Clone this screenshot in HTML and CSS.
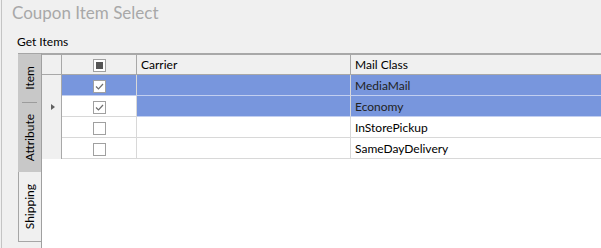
FILE: index.html
```html
<!DOCTYPE html>
<html>

<head>
	<meta charset="UTF-8">
	<title>Coupon Item Select</title>
	<link rel="stylesheet" href="styles.css">
</head>

<body>
	<div class="window">
		<h1 class="title">Coupon Item Select</h1>
		<div class="section-label">Get Items</div>

		<div class="panel">
			<!-- 縦タブ -->
			<div class="tabs">
				<div class="tab"><span>Item</span></div>
				<div class="tab-sep"></div>
				<div class="tab tab-long"><span>Attribute</span></div>
				<div class="tab tab-long selected"><span>Shipping</span></div>
			</div>

			<div class="grid">
				<table>
					<colgroup>
						<col class="col-rowhead">
						<col class="col-check">
						<col class="col-carrier">
						<col>
					</colgroup>
					<thead>
						<tr>
							<th class="rowhead"></th>
							<th class="check"><span class="checkbox partial"></span></th>
							<th>Carrier</th>
							<th class="last">Mail Class</th>
						</tr>
					</thead>
					<tbody>
						<tr class="selected-row">
							<td class="rowhead"></td>
							<td class="check"><span class="checkbox checked"><svg viewBox="0 0 11 11"><polyline points="2,5.5 4.5,8 9,3" /></svg></span></td>
							<td></td>
							<td class="last">MediaMail</td>
						</tr>
						<tr class="selected-row current">
							<td class="rowhead"><span class="row-arrow"></span></td>
							<td class="check"><span class="checkbox checked"><svg viewBox="0 0 11 11"><polyline points="2,5.5 4.5,8 9,3" /></svg></span></td>
							<td></td>
							<td class="last">Economy</td>
						</tr>
						<tr>
							<td class="rowhead"></td>
							<td class="check"><span class="checkbox"></span></td>
							<td></td>
							<td class="last">InStorePickup</td>
						</tr>
						<tr>
							<td class="rowhead"></td>
							<td class="check"><span class="checkbox"></span></td>
							<td></td>
							<td class="last">SameDayDelivery</td>
						</tr>
					</tbody>
				</table>
			</div>
		</div>
	</div>
</body>

</html>
```

FILE: styles.css
```css
html,
body {
	margin: 0;
	height: 100%;
	background: #f0f0f0;
	font-family: "Lato", "Noto Sans", sans-serif;
	font-size: 12px;
	color: #000;
}

.window {
	box-sizing: border-box;
	height: 248px;
	margin-left: 1px;
	border-left: 1px solid #c4c4c4;
	display: flex;
	flex-direction: column;
	overflow: hidden;
}

.title {
	margin: 0;
	padding: 3px 0 0 10px;
	height: 27px;
	font-size: 17px;
	font-weight: normal;
	line-height: 20px;
	color: #a8a8a8;
}

.section-label {
	padding: 5px 0 0 15px;
	height: 18px;
	line-height: 14px;
}

/* タブ + グリッド */
.panel {
	flex: 1;
	display: flex;
	padding-left: 16px;
	min-height: 0;
}

.tabs {
	width: 23px;
	display: flex;
	flex-direction: column;
}

.tab {
	height: 49px;
	background: #c8c8c8;
	border-top: 1px solid #a6a6a6;
	box-sizing: border-box;
	display: flex;
	align-items: center;
	justify-content: center;
}

.tab span {
	writing-mode: vertical-rl;
	transform: rotate(180deg);
	line-height: 14px;
}

.tab-sep {
	height: 1px;
	margin: 0 4px;
	background: #9c9c9c;
	box-shadow: 0 0 0 4px #c8c8c8;
	clip-path: inset(0 -4px 0 -4px);
}

.tab-long {
	height: 69px;
	border-top: none;
}

.tab.selected {
	height: 70px;
	background: #f0f0f0;
	border-left: 1px solid #a6a6a6;
	border-bottom: 1px solid #a6a6a6;
}

.grid {
	flex: 1;
	background: #fff;
	border-left: 1px solid #a0a0a0;
}

table {
	width: 100%;
	table-layout: fixed;
	border-collapse: separate;
	border-spacing: 0;
}

.col-rowhead {
	width: 20px;
}

.col-check {
	width: 75px;
}

.col-carrier {
	width: 214px;
}

th,
td {
	box-sizing: border-box;
	height: 21px;
	padding: 0 0 0 4px;
	border-right: 1px solid #d8d8d8;
	border-bottom: 1px solid #d8d8d8;
	text-align: left;
	font-weight: normal;
	white-space: nowrap;
	overflow: hidden;
	vertical-align: middle;
}

th {
	height: 22px;
	background: #f0f0f0;
	border-top: 2px solid #a8a8a8;
	border-right-color: #a8a8a8;
	border-bottom-color: #a8a8a8;
}

th.last,
td.last {
	border-right: none;
}

td.rowhead,
th.rowhead {
	padding: 0;
	background: #f0f0f0;
	border-right-color: #a8a8a8;
	border-bottom: none;
}

th.rowhead {
	border-bottom: 1px solid #a8a8a8;
}

.check {
	padding: 0;
	text-align: center;
}

.selected-row td {
	background: #7896dd;
	color: #222;
	border-bottom-color: #c2cff0;
}

.selected-row td.rowhead {
	background: #f0f0f0;
}

.selected-row.current td.check {
	background: #fff;
	border-bottom-color: #d8d8d8;
}

.checkbox {
	display: inline-block;
	box-sizing: border-box;
	width: 13px;
	height: 13px;
	border: 1px solid #a0a0a0;
	background: #fff;
	vertical-align: middle;
	position: relative;
}

.checkbox svg {
	display: block;
	width: 11px;
	height: 11px;
	fill: none;
	stroke: #6e6e6e;
	stroke-width: 1.2;
}

.checkbox.partial::after {
	content: "";
	display: block;
	margin: 2px;
	width: 7px;
	height: 7px;
	background: #555;
}

.row-arrow {
	display: block;
	margin-left: 9px;
	width: 0;
	height: 0;
	border-top: 3.5px solid transparent;
	border-bottom: 3.5px solid transparent;
	border-left: 4px solid #606060;
}
```
